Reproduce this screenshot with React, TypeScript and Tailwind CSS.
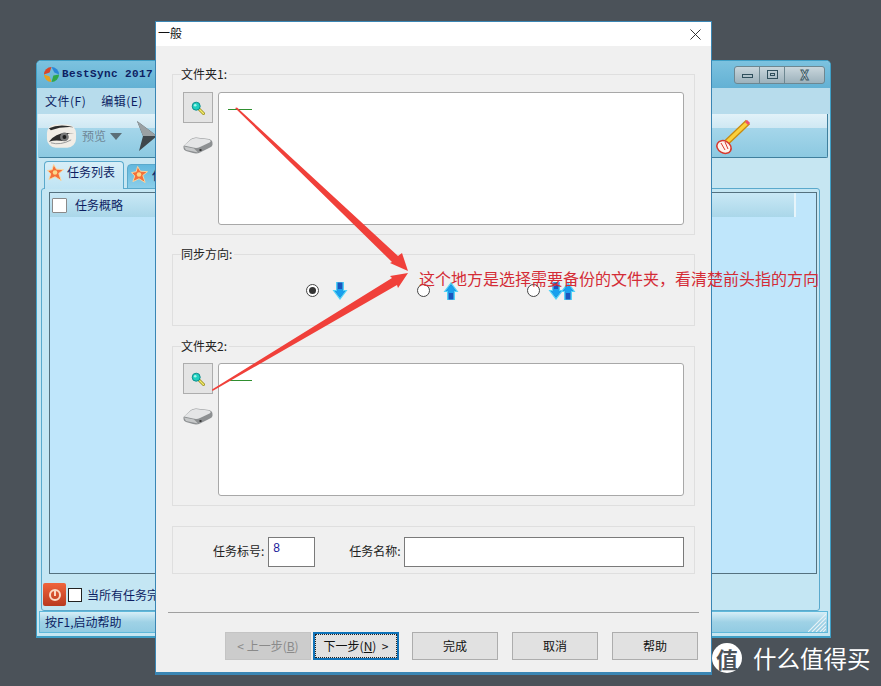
import React from "react";

const cjk = { fontFamily: '"Noto Sans CJK SC", sans-serif' };

function Star({ className }: { className?: string }) {
  return (
    <svg viewBox="0 0 18 18" className={className}>
      <path d="M7 0.5 L10 5.5 L17.5 6 L12.5 10 L15 17.5 L8.5 13.5 L2 16.5 L4 10.5 L0.5 7 L5.5 6 Z" fill="#f4703a" stroke="#fbd9a0" strokeWidth="1" />
      <circle cx="8.5" cy="9" r="2.4" fill="#fbd88a" />
    </svg>
  );
}

function Magnifier() {
  return (
    <svg viewBox="0 0 14 14" className="w-[14px] h-[14px]">
      <path d="M7.5 7.5 L12.5 12.5" stroke="#9a8f20" strokeWidth="3" strokeLinecap="round" />
      <path d="M7.5 7.5 L12.5 12.5" stroke="#f4ee6c" strokeWidth="1.4" strokeLinecap="round" />
      <circle cx="5.2" cy="5.2" r="4" fill="#1fd0c0" stroke="#0f8c8c" strokeWidth="1" />
      <circle cx="4.2" cy="4.2" r="1.3" fill="#a5f5ea" />
    </svg>
  );
}

function Disk() {
  return (
    <svg viewBox="0 0 30 17" className="w-[30px] h-[17px]">
      <path d="M0.5 9 L8 2 Q10 0.5 13 0.5 L26 2 Q29.5 3 29.5 6 L29.5 8 Q29 10 26 11 L17 15.5 Q14 17 10 16 L3 14 Q0.5 13 0.5 11 Z" fill="#8d9092" />
      <path d="M1 8.5 L8 2.5 Q10 1 13 1 L26 2.5 Q29 4 26.5 5.5 L17 10 Q14 11.5 10 10.5 Z" fill="#e4e5e6" />
      <path d="M1 9.5 L11 11.5 L15 15.5 L3 13 Z" fill="#c6c8c9" />
      <rect x="16.5" y="12" width="2" height="2" fill="#3a3a3a" />
    </svg>
  );
}

function DirArrow({ up, className }: { up?: boolean; className?: string }) {
  return (
    <svg viewBox="0 0 16 20" className={className}>
      <g transform={up ? "translate(0 20) scale(1 -1)" : undefined}>
        <path d="M4 1 H12 V9 H15.5 L8 19 L0.5 9 H4 Z" fill="#4fd2f7" />
        <path d="M5.5 1.5 H10.5 V10 H13 L8 16.5 L3 10 H5.5 Z" fill="#1a55bd" />
        <path d="M5.5 8 H10.5 V10 H13 L8 16.5 L3 10 H5.5 Z" fill="#18a0ee" />
      </g>
    </svg>
  );
}

function Radio({ checked }: { checked?: boolean }) {
  return (
    <span className="w-[13px] h-[13px] rounded-full border border-[#444] bg-white flex items-center justify-center">
      {checked && <span className="w-[7px] h-[7px] rounded-full bg-[#333]" />}
    </span>
  );
}

function Group({ label, className, children }: { label: string; className: string; children?: React.ReactNode }) {
  return (
    <div className={`relative border border-[#dfdfdf] ${className}`}>
      <span className="absolute left-[8px] top-[-9px] bg-[#f0f0f0] pr-[2px] text-[12px] leading-[16px] text-[#222]">{label}</span>
      {children}
    </div>
  );
}

function FolderRow() {
  return (
    <div className="flex gap-[4px] pl-[10px]">
      <div className="flex flex-col w-[31px] shrink-0 items-start">
        <div className="w-[30px] h-[31px] bg-[#e4e4e4] border border-[#adadad] flex items-center justify-center">
          <Magnifier />
        </div>
        <div className="mt-[14px]"><Disk /></div>
      </div>
      <div className="relative w-[466px] h-[133px] bg-white border border-[#a8a8a8] rounded-[3px]">
        <div className="absolute left-[9px] top-[16px] w-[24px] h-px bg-[#2f8f2f]" />
      </div>
    </div>
  );
}

function Btn({ children, kind }: { children: React.ReactNode; kind?: "disabled" | "focus" }) {
  const cls =
    kind === "disabled"
      ? "bg-[#cccccc] text-[#8a8a8a] border border-[#c4c4c4]"
      : kind === "focus"
        ? "bg-[#e1e1e1] text-[#111] border-2 border-[#0f72b8] outline outline-1 -outline-offset-3 outline-dotted outline-[#222]"
        : "bg-[#e1e1e1] text-[#111] border border-[#adadad]";
  return <div className={`w-[86px] h-[28px] flex items-center justify-center text-[12px] ${cls}`}>{children}</div>;
}

function MainWindow() {
  return (
    <div className="absolute left-[36px] top-[60px] w-[795px] h-[578px] flex flex-col border border-[#3f9fc6] border-b-2 rounded-t-[5px] bg-[#c6e6f2] overflow-hidden" style={cjk}>
      <div className="h-[27px] shrink-0 bg-gradient-to-b from-[#7cc2df] to-[#63b1d4] flex items-center pl-[6px]">
        <svg viewBox="0 0 18 18" className="w-[17px] h-[17px]">
          <path d="M9 1 A8 8 0 0 1 17 9 L12 7 Z" fill="#2a86d8" />
          <path d="M17 9 A8 8 0 0 1 9 17 L11 10 Z" fill="#2fa84a" />
          <path d="M9 17 A8 8 0 0 1 1 9 L7 11 Z" fill="#e8a020" />
          <path d="M1 9 A8 8 0 0 1 9 1 L7 7 Z" fill="#d8452a" />
        </svg>
        <span className="ml-[2px] text-[11px] font-bold text-[#0d1f63] tracking-[0.4px]" style={{ fontFamily: '"Liberation Mono", monospace' }}>BestSync 2017</span>
        <div className="ml-auto mr-[5px] flex h-[18px] w-[91px] rounded-[3px] border border-[#6d8791] bg-gradient-to-b from-[#c9d6dc] to-[#9db2bc]">
          <div className="w-[25px] border-r border-[#6d8791] flex items-center justify-center pt-[3px]"><div className="w-[11px] h-[4px] border border-[#2f4f5c]" /></div>
          <div className="w-[25px] border-r border-[#6d8791] flex items-center justify-center"><div className="w-[11px] h-[9px] border border-[#2f4f5c] flex items-center justify-center"><div className="w-[5px] h-[3px] border border-[#2f4f5c]" /></div></div>
          <div className="flex-1 flex items-center justify-center text-[13px] font-bold leading-none text-[#e8f0f2] [-webkit-text-stroke:1px_#3d5a66]">X</div>
        </div>
      </div>
      <div className="h-[26px] shrink-0 bg-[#b7dcec] flex items-center pl-[8px] gap-[15px] text-[12px] tracking-[0.5px] text-[#0d1f63]">
        <span>文件(F)</span>
        <span>编辑(E)</span>
      </div>
      <div className="h-[44px] shrink-0 flex flex-col border border-[#3f7f9d] border-t-0 border-l-0 mr-[2px] ml-[1px] rounded-b-[2px]">
        <div className="h-[14px] bg-gradient-to-b from-[#e2f2f9] to-[#cfe8f3]" />
        <div className="flex-1 bg-gradient-to-b from-[#a5d6ea] to-[#8cc9e1]" />
        <div className="absolute left-[9px] top-[60px] flex items-center">
          <svg viewBox="0 0 32 26" className="w-[31px] h-[26px]">
            <rect x="1" y="1" width="30" height="24" rx="9" fill="#f1ede6" />
            <path d="M3 5 Q14 0 29 4 Q16 3 5 7 Z" fill="#2c2c2c" />
            <path d="M3 19 Q12 7 29 11 Q20 9 23 14 Q22 19 15 18 Q9 17 3 19 Z" fill="#2c2c2c" />
            <circle cx="19" cy="14" r="4.5" fill="#777" />
            <circle cx="19" cy="14" r="2" fill="#1d1d1d" />
            <path d="M5 20 Q15 23 26 17" stroke="#999" fill="none" />
          </svg>
          <span className="ml-[5px] text-[12px] text-[#6f8797]">预览</span>
          <span className="ml-[4px] mt-[1px] w-0 h-0 border-l-[6px] border-r-[6px] border-t-[7px] border-l-transparent border-r-transparent border-t-[#5b6f78]" />
          <svg viewBox="0 0 20 30" className="ml-[15px] w-[20px] h-[30px]">
            <path d="M0 0 L20 15 L2 30 L6 15 Z" fill="#3f474c" />
            <path d="M0 0 L20 15 L6 15 Z" fill="#9aa1a4" />
          </svg>
        </div>
        <svg viewBox="0 0 36 36" className="absolute left-[678px] top-[58px] w-[36px] h-[36px]">
          <path d="M33 3 L12 23" stroke="#c78a10" strokeWidth="6" />
          <path d="M33 3 L12 23" stroke="#fbd03c" strokeWidth="3.5" />
          <path d="M31 2 L34 5" stroke="#f0506a" strokeWidth="3" />
          <ellipse cx="9" cy="28" rx="7.5" ry="6" transform="rotate(30 9 28)" fill="#fff3ec" stroke="#d63a2e" strokeWidth="1.5" />
          <path d="M6 24 L10 31 M10 23 L13 30" stroke="#d63a2e" strokeWidth="1" />
        </svg>
      </div>
      <div className="flex-1 flex flex-col px-[4px] pt-[3px]">
        <div className="flex h-[27px] pl-[3px] gap-[3px] shrink-0">
          <div className="relative z-10 w-[80px] h-[28px] rounded-t-[4px] border border-[#5aa9cc] border-b-0 bg-gradient-to-b from-[#d8eef7] to-[#bfe4f4] flex items-start pl-[2px] gap-[3px] text-[12px] leading-[20px] text-[#0d1f63]">
            <Star className="w-[17px] h-[17px] mt-[2px]" />
            <span>任务列表</span>
          </div>
          <div className="w-[80px] h-[27px] mt-[3px] rounded-t-[4px] border border-[#5aa9cc] bg-gradient-to-b from-[#62b8de] to-[#8fd0ea] flex items-start pt-[1px] pl-[3px] gap-[4px] text-[12px] whitespace-nowrap text-[#0d1f63]">
            <Star className="w-[17px] h-[17px] shrink-0" />
            <span>任务</span>
          </div>
        </div>
        <div className="h-[423px] mr-[6px] border border-[#5aa9cc] rounded-[3px] bg-[#c4e6f3] pl-[7px] pr-[2px] pt-[3px] shrink-0">
          <div className="h-[382px] border border-[#54717f] bg-[#bfe6fb] flex flex-col">
            <div className="h-[24px] shrink-0 flex items-center pl-[2px] bg-gradient-to-b from-[#c9e8f5] to-[#aad7e9] mr-[20px] border-r-2 border-[#e6f4fa]">
              <span className="w-[15px] h-[15px] bg-white border border-[#8a8a8a] rounded-[1px]" />
              <span className="ml-[8px] text-[12px] text-[#0d1f63]">任务概略</span>
            </div>
          </div>
          <div className="flex items-center mt-[9px] -ml-[6px]">
            <div className="w-[23px] h-[23px] rounded-[2px] bg-gradient-to-b from-[#f0643c] to-[#b93a20] flex items-center justify-center">
              <span className="w-[12px] h-[12px] rounded-full border-2 border-[#fbd9c5] flex justify-center"><span className="w-[2px] h-[5px] bg-[#fbd9c5]" /></span>
            </div>
            <span className="ml-[2px] w-[14px] h-[14px] bg-white border border-[#222]" />
            <span className="ml-[5px] text-[12px] text-[#0d1f63]">当所有任务完成</span>
          </div>
        </div>
      </div>
      <div className="relative h-[22px] shrink-0 border border-[#5fb8da] mx-[2px] mb-[4px] bg-gradient-to-b from-[#d6eef7] via-[#9fd2e6] to-[#92cbe2] flex items-center pl-[5px] text-[12px] text-[#0d1f63]">
        <span>按F1,启动帮助</span>
        <svg viewBox="0 0 18 18" className="absolute right-[1px] bottom-0 w-[18px] h-[18px]">
          <path d="M18 0 L0 18 M18 4 L4 18 M18 8 L8 18 M18 12 L12 18 M18 15 L15 18" stroke="#e8f2f6" strokeWidth="1.2" />
        </svg>
      </div>
    </div>
  );
}

function Dialog() {
  return (
    <div className="absolute left-[155px] top-[21px] w-[557px] h-[654px] flex flex-col bg-[#f0f0f0] border border-[#3a86b4] border-b-[3px]" style={cjk}>
      <div className="h-[24px] shrink-0 bg-white flex items-center pl-[2px] pb-[2px] text-[12px] text-[#111]">
        <span>一般</span>
        <svg viewBox="0 0 12 12" className="ml-auto mr-[10px] mt-[2px] w-[11px] h-[11px]">
          <path d="M0.5 0.5 L11.5 11.5 M11.5 0.5 L0.5 11.5" stroke="#222" strokeWidth="1" />
        </svg>
      </div>
      <div className="flex-1 flex flex-col px-[16px] pt-[28px]">
        <Group label="文件夹1:" className="h-[161px] pt-[17px]">
          <FolderRow />
        </Group>
        <Group label="同步方向:" className="h-[72px] mt-[19px]">
          <div className="flex items-center h-[72px] pb-[1px] pl-[133px]">
            <Radio checked />
            <DirArrow className="ml-[13px] w-[16px] h-[20px]" />
            <div className="ml-[69px]"><Radio /></div>
            <DirArrow up className="ml-[13px] w-[16px] h-[20px]" />
            <div className="ml-[68px]"><Radio /></div>
            <DirArrow className="ml-[8px] w-[16px] h-[20px]" />
            <DirArrow up className="-ml-[4px] w-[16px] h-[20px]" />
          </div>
        </Group>
        <Group label="文件夹2:" className="h-[160px] mt-[20px] pt-[16px]">
          <FolderRow />
        </Group>
        <div className="h-[48px] mt-[20px] border border-[#dfdfdf] flex items-center pl-[40px] pt-[3px] text-[12px] text-[#222]">
          <span className="-mt-[2px]">任务标号:</span>
          <div className="ml-[4px] w-[47px] h-[30px] bg-white border border-[#7a7a7a] pl-[4px] text-[#1a1a9a] leading-[20px]" style={{ fontFamily: '"Liberation Sans", sans-serif' }}>8</div>
          <span className="ml-[34px] -mt-[2px]">任务名称:</span>
          <div className="ml-[3px] w-[280px] h-[30px] bg-white border border-[#7a7a7a]" />
        </div>
        <div className="h-px bg-[#a0a0a0] mt-[38px] -mx-[4px]" />
        <div className="flex mt-[19px] -mr-[2px]">
          <div className="ml-[53px]"><Btn kind="disabled">&lt; 上一步(<u>B</u>)</Btn></div>
          <div className="ml-[2px]"><Btn kind="focus">下一步(<u>N</u>) &nbsp;&gt;</Btn></div>
          <div className="ml-[13px]"><Btn>完成</Btn></div>
          <div className="ml-[14px]"><Btn>取消</Btn></div>
          <div className="ml-[14px]"><Btn>帮助</Btn></div>
        </div>
      </div>
    </div>
  );
}

export default function App() {
  return (
    <div className="relative w-[881px] h-[686px] overflow-hidden bg-[#4b5259]">
      <MainWindow />
      <Dialog />
      <svg viewBox="0 0 881 686" className="absolute left-0 top-0 w-[881px] h-[686px] pointer-events-none">
        <path d="M235 108 L237 107.5 L398 256 L402 253 L408 271 L390 263 L392 262 Z" fill="#f0403a" />
        <path d="M212 389.5 L212.5 391 L397 285 L398 288 L408 273 L390 276 L392 278 Z" fill="#f0403a" />
      </svg>
      <div className="absolute left-[419px] top-[266px] text-[16px] leading-[24px] text-[#d42c36] whitespace-nowrap" style={cjk}>
        这个地方是选择需要备份的文件夹，看清楚前头指的方向
      </div>
      <div className="absolute left-[712px] top-[643px] flex items-center" style={cjk}>
        <div className="w-[30px] h-[30px] rounded-full bg-white flex items-center justify-center text-[22px] font-bold text-[#4b5259] leading-none">值</div>
        <span className="ml-[11px] text-[23.5px] leading-[30px] text-white">什么值得买</span>
      </div>
    </div>
  );
}
